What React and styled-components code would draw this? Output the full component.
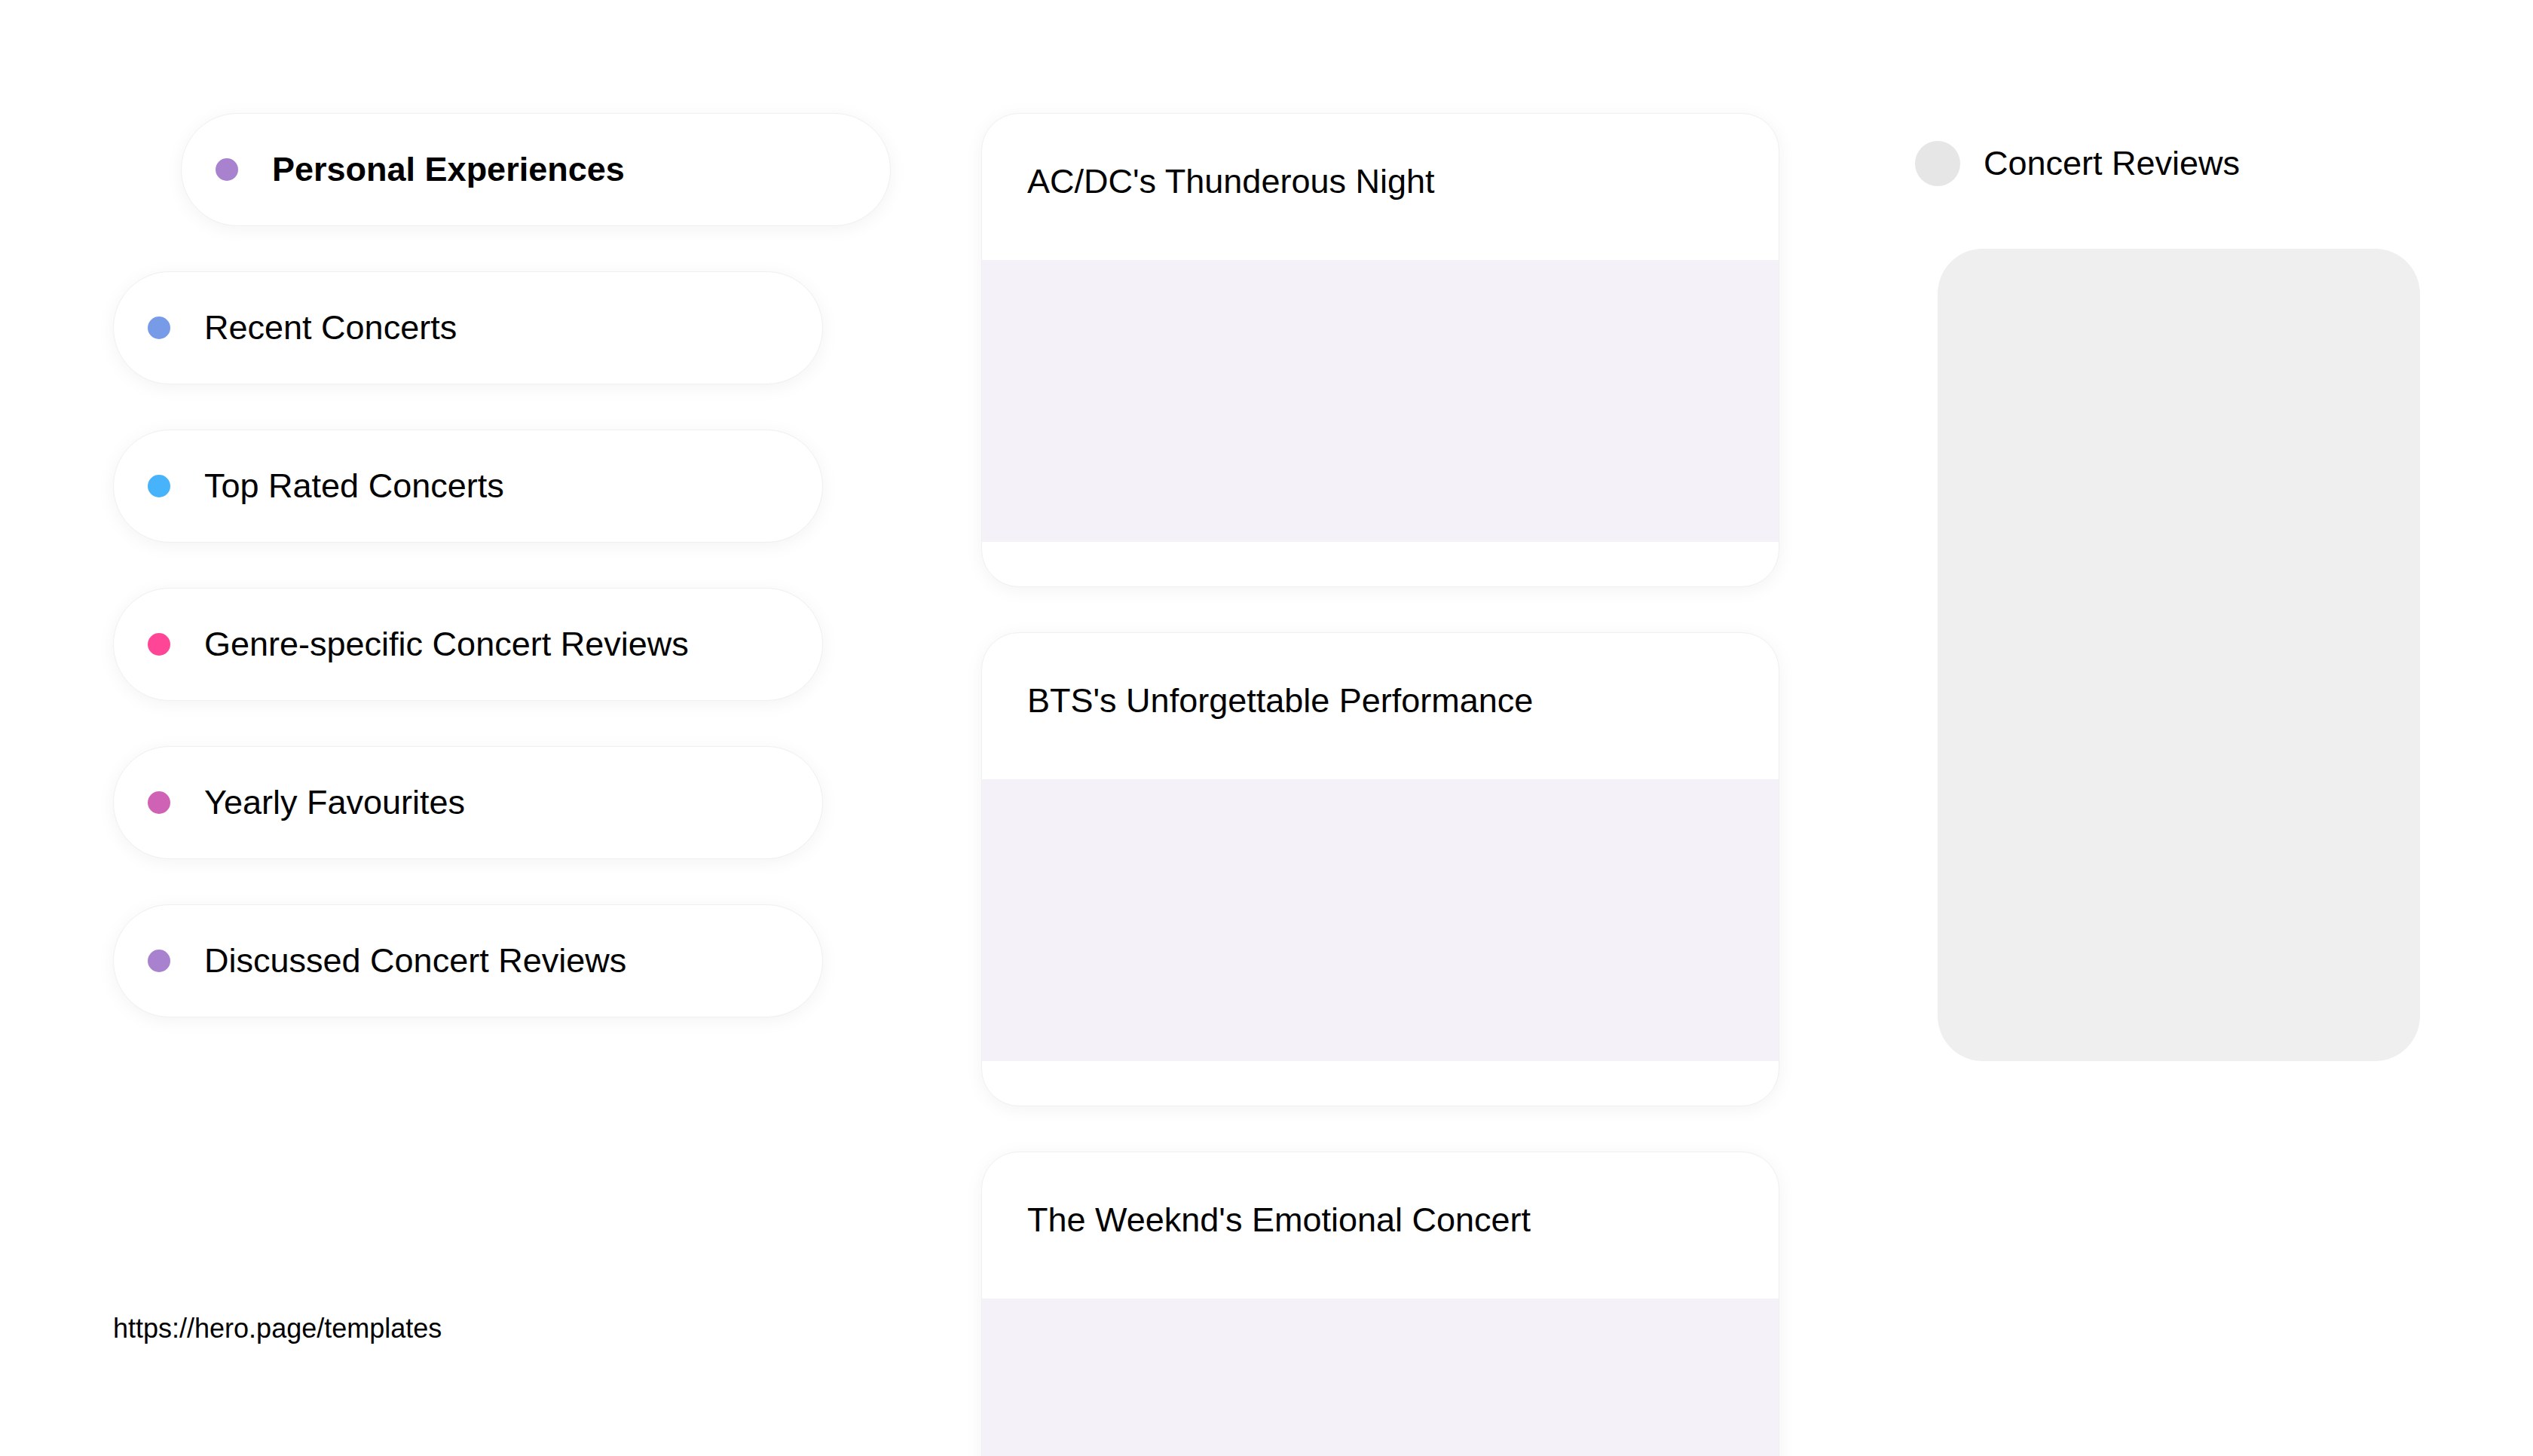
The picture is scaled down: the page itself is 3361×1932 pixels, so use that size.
import React from "react";
import styled, { createGlobalStyle } from "styled-components";

const GlobalStyle = createGlobalStyle`
  html, body {
    margin: 0;
    padding: 0;
    background: #fff;
  }
  body {
    font-family: "Liberation Sans", Arial, sans-serif;
    color: #000;
  }
`;

const Page = styled.div`
  display: flex;
  align-items: flex-start;
  padding: 150px 150px 0 150px;
  box-sizing: border-box;
  width: 100%;
`;

const LeftColumn = styled.div`
  display: flex;
  flex-direction: column;
  gap: 60px;
  width: 1032px;
  flex-shrink: 0;
`;

const Pill = styled.div`
  display: flex;
  align-items: center;
  box-sizing: border-box;
  width: 942px;
  height: 150px;
  margin-left: ${(p) => (p.$indent ? "90px" : "0")};
  padding-left: 45px;
  background: #fff;
  border: 1px solid #f0f0f0;
  border-radius: 75px;
  box-shadow: 0 4px 24px rgba(0, 0, 0, 0.05);
  font-size: 45px;
  font-weight: ${(p) => (p.$active ? 700 : 400)};
`;

const Dot = styled.span`
  width: 30px;
  height: 30px;
  border-radius: 50%;
  background: ${(p) => p.$color};
  flex-shrink: 0;
  margin-right: 45px;
`;

const FooterLink = styled.div`
  margin-top: 332px;
  font-size: 36px;
  line-height: 41px;
`;

const CenterColumn = styled.div`
  display: flex;
  flex-direction: column;
  gap: 60px;
  width: 1059px;
  margin-left: 120px;
  flex-shrink: 0;
`;

const Card = styled.div`
  box-sizing: border-box;
  border: 1px solid #f0f0f0;
  border-radius: 50px;
  background: #fff;
  overflow: hidden;
  box-shadow: 0 4px 24px rgba(0, 0, 0, 0.05);
`;

const CardHeader = styled.div`
  box-sizing: border-box;
  height: 194px;
  padding: 64px 60px 0 60px;
  font-size: 45px;
  line-height: 52px;
`;

const CardMedia = styled.div`
  height: 374px;
  background: #f4f2f8;
`;

const CardFooter = styled.div`
  height: 59px;
`;

const RightColumn = styled.div`
  display: flex;
  flex-direction: column;
  width: 670px;
  margin-left: 180px;
  padding-top: 37px;
  flex-shrink: 0;
`;

const SectionHead = styled.div`
  display: flex;
  align-items: center;
  gap: 31px;
  font-size: 45px;
`;

const Avatar = styled.span`
  width: 60px;
  height: 60px;
  border-radius: 50%;
  background: #e6e6e6;
  flex-shrink: 0;
`;

const Placeholder = styled.div`
  margin: 83px 0 0 30px;
  width: 640px;
  height: 1078px;
  border-radius: 60px;
  background: #efefef;
`;

const categories = [
  { label: "Personal Experiences", color: "#a882cf", active: true },
  { label: "Recent Concerts", color: "#779be7" },
  { label: "Top Rated Concerts", color: "#47b3fb" },
  { label: "Genre-specific Concert Reviews", color: "#ff4696" },
  { label: "Yearly Favourites", color: "#d062b5" },
  { label: "Discussed Concert Reviews", color: "#a882cf" },
];

const reviews = [
  "AC/DC's Thunderous Night",
  "BTS's Unforgettable Performance",
  "The Weeknd's Emotional Concert",
];

export default function App() {
  return (
    <>
      <GlobalStyle />
      <Page>
        <LeftColumn>
          {categories.map((c) => (
            <Pill key={c.label} $indent={c.active} $active={c.active}>
              <Dot $color={c.color} />
              {c.label}
            </Pill>
          ))}
          <FooterLink>https://hero.page/templates</FooterLink>
        </LeftColumn>

        <CenterColumn>
          {reviews.map((title) => (
            <Card key={title}>
              <CardHeader>{title}</CardHeader>
              <CardMedia />
              <CardFooter />
            </Card>
          ))}
        </CenterColumn>

        <RightColumn>
          <SectionHead>
            <Avatar />
            Concert Reviews
          </SectionHead>
          <Placeholder />
        </RightColumn>
      </Page>
    </>
  );
}
